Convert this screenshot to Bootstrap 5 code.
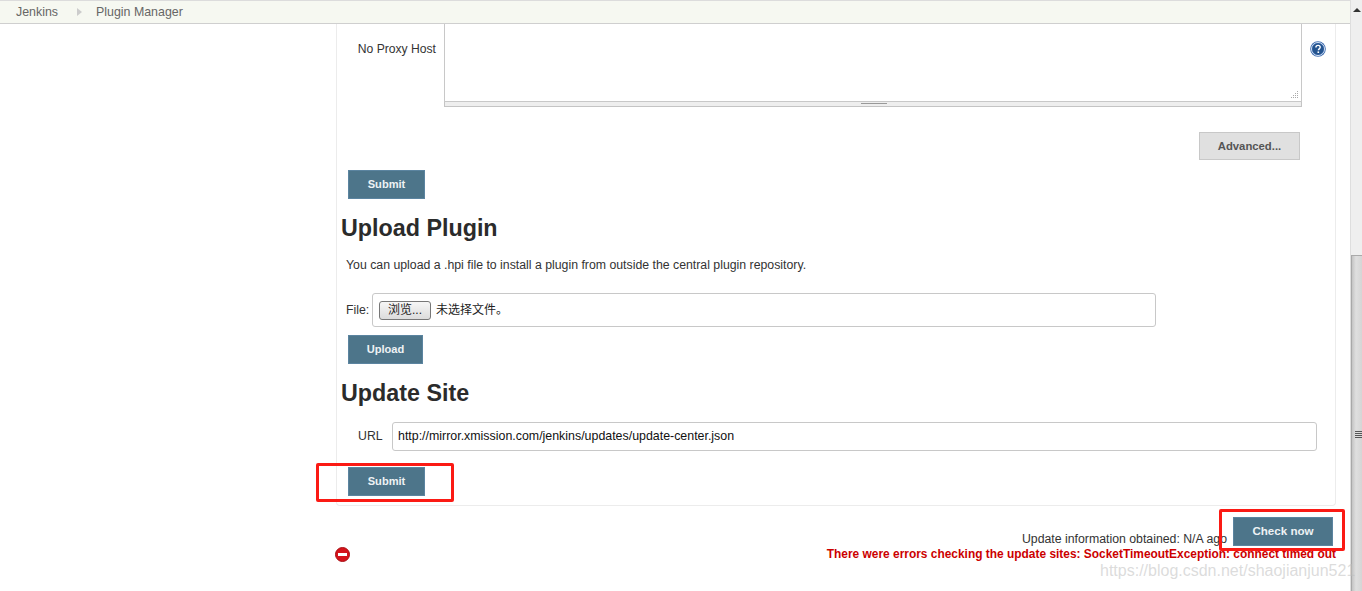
<!DOCTYPE html>
<html lang="en">
<head>
<meta charset="utf-8">
<title>Plugin Manager</title>
<link href="https://cdn.jsdelivr.net/npm/bootstrap@5.3.0/dist/css/bootstrap.min.css" rel="stylesheet">
<style>
html,body{height:591px;overflow:hidden}
body{font-family:"Liberation Sans",Arial,sans-serif;font-size:12.3px;color:#333;background:#fff;position:relative}
.page-col{width:1350px;height:591px}
.crumb-bar{height:24px;background:#f6f8f1;border-top:1px solid #dcdcdc;border-bottom:1px solid #cfcfcf;padding-left:16px;color:#666;font-size:12.4px;line-height:23px}
.crumb-arrow{width:0;height:0;border-left:5px solid #ccc;border-top:4px solid transparent;border-bottom:4px solid transparent;margin:0 14px 0 19px}
.panel-wrap{margin-left:336px;width:1000px;height:482px;border:1px solid #ececec;border-top:0;border-bottom-right-radius:4px;border-bottom-left-radius:4px;padding-left:4px}
.proxy-label{width:95px;text-align:right;padding-top:16px;margin-right:8px;font-size:12.15px}
.fake-area{width:858px;height:78px;border:1px solid #c8c8c8;border-top:0;position:relative}
.area-grip{position:absolute;right:2px;bottom:2px}
.area-bar{width:858px;height:5px;margin-left:103px;background:#eee;border:1px solid #c4c4c4;border-top:0;position:relative}
.area-bar::after{content:"";position:absolute;left:416px;top:1px;width:26px;height:1px;background:#999}
.help-dot{margin:17px 0 0 8px}
.jbtn{display:block;height:29px;background:#4d758a;border:1px solid #5b84a0;border-radius:0;color:#eef2f4;font-weight:700;font-size:11.1px;line-height:27px;padding:0;text-align:center}
.jbtn:hover{background:#4d758a;color:#eef2f4;border-color:#5b84a0}
.jbtn-77{width:77px;margin-left:7px}
.jbtn-75{width:75px;margin-left:7px}
.adv-btn{width:101px;height:28px;background:#e0e0e0;border:1px solid #c8c8c8;border-radius:0;color:#555;font-weight:700;font-size:11.3px;line-height:26px;padding:0;margin:25px 0 0 858px;display:block}
.jhead{font-size:23.3px;font-weight:700;color:#2b2b2b;line-height:28px;margin:0}
.intro{margin:0;padding-left:5px;line-height:14px;color:#333}
.file-label{padding-left:5px;width:31px;white-space:nowrap}
.file-box{width:784px;height:34px;border:1px solid #c8c8c8;border-radius:3px;padding-left:6px;font-size:12px;color:#222;font-family:"Liberation Sans","Noto Sans CJK SC",sans-serif}
.fake-browse{width:52px;height:19px;line-height:17px;text-align:center;background:linear-gradient(#f6f6f6,#dcdcdc);border:1px solid #777;border-radius:3px;margin-right:5px;color:#222}
.url-label{padding-left:17px;width:51px;font-size:12.3px}
.url-input{width:925px;height:29px;border:1px solid #c8c8c8;border-radius:3px;padding:0 5px;font-size:12.4px;font-family:"Liberation Sans",sans-serif;color:#111;line-height:27px}
.foot-row{height:86px;width:1000px;margin-left:336px;position:relative}
.info-line{height:29px;margin-top:11px}
.info-text{line-height:16px;padding-top:14px;margin-right:6px;color:#333}
.check-btn{width:100px;margin-right:3px;font-size:11.6px;line-height:25px}
.err-line{height:16px;line-height:14px}
.err-text{color:#c00;font-weight:700;font-size:11.93px}
.stop-mark{margin-left:-1px}
.scroll-col{width:12px;height:591px;background:#efefef;border-left:1px solid #dedede}
.scroll-arrow{width:0;height:0;border-left:4px solid transparent;border-right:4px solid transparent;border-bottom:4px solid #333;margin:8px auto 0}
.scroll-thumb{margin-top:243px;height:336px;background:linear-gradient(90deg,#c4c4c4,#dfdfdf 40%,#d5d5d5);border-top:1px solid #aaa;border-left:1px solid #a8a8a8;position:relative}
.scroll-lines{position:absolute;top:175px;left:3px;width:7px;height:8px;background:repeating-linear-gradient(#555 0 1px,transparent 1px 2px)}
.note-box{position:absolute;border:3px solid #fb1a14;border-radius:2px;pointer-events:none}
.note-a{left:316px;top:463px;width:138px;height:39px}
.note-b{left:1219px;top:509px;width:126px;height:42px}
.wm{position:absolute;left:1100px;top:561px;font-size:16px;color:rgba(190,190,190,.55);line-height:20px;white-space:nowrap}
</style>
</head>
<body>
<div class="d-flex">
  <div class="page-col">
    <div class="crumb-bar d-flex align-items-center">
      <span>Jenkins</span><span class="crumb-arrow"></span><span>Plugin Manager</span>
    </div>
    <div class="panel-wrap">
      <div class="d-flex">
        <div class="proxy-label">No Proxy Host</div>
        <div class="fake-area">
          <svg class="area-grip" width="9" height="9" viewBox="0 0 9 9"><g fill="#aaa"><rect x="7" y="1" width="1" height="1"/><rect x="5" y="3" width="1" height="1"/><rect x="7" y="3" width="1" height="1"/><rect x="3" y="5" width="1" height="1"/><rect x="5" y="5" width="1" height="1"/><rect x="7" y="5" width="1" height="1"/><rect x="1" y="7" width="1" height="1"/><rect x="3" y="7" width="1" height="1"/><rect x="5" y="7" width="1" height="1"/><rect x="7" y="7" width="1" height="1"/></g></svg>
        </div>
        <svg class="help-dot" width="16" height="16" viewBox="0 0 16 16"><circle cx="8" cy="8" r="7.8" fill="#3f6db0"/><circle cx="8" cy="8" r="6.5" fill="none" stroke="#d8e4f4" stroke-width="1"/><circle cx="8" cy="8" r="5.7" fill="#24548f"/><path d="M5.9 6.4c0-1.3 1-2 2.2-2s2.1.7 2.1 1.9c0 1.6-1.8 1.6-1.8 3" fill="none" stroke="#fff" stroke-width="1.4"/><rect x="7.5" y="10.4" width="1.6" height="1.6" fill="#fff"/></svg>
      </div>
      <div class="area-bar"></div>
      <button type="button" class="btn adv-btn">Advanced...</button>
      <a class="btn jbtn jbtn-77" style="margin-top:10px">Submit</a>
      <h2 class="jhead" style="margin-top:15px">Upload Plugin</h2>
      <p class="intro" style="margin-top:16px">You can upload a .hpi file to install a plugin from outside the central plugin repository.</p>
      <div class="d-flex align-items-center" style="margin-top:21px">
        <span class="file-label">File:</span>
        <div class="file-box d-flex align-items-center"><span class="fake-browse">浏览...</span><span>未选择文件。</span></div>
      </div>
      <a class="btn jbtn jbtn-75" style="margin-top:8px">Upload</a>
      <h2 class="jhead" style="margin-top:15px">Update Site</h2>
      <div class="d-flex align-items-center" style="margin-top:15px">
        <span class="url-label">URL</span>
        <div class="url-input">http://mirror.xmission.com/jenkins/updates/update-center.json</div>
      </div>
      <a class="btn jbtn jbtn-77" style="margin-top:16px">Submit</a>
    </div>
    <div class="foot-row">
      <div class="info-line d-flex justify-content-end">
        <span class="info-text">Update information obtained: N/A ago</span>
        <a class="btn jbtn check-btn">Check now</a>
      </div>
      <div class="err-line d-flex justify-content-between align-items-center">
        <svg class="stop-mark" width="15" height="15" viewBox="0 0 15 15"><circle cx="7.5" cy="7.5" r="7" fill="#d5121a"/><circle cx="7.5" cy="7.5" r="7" fill="none" stroke="#a80f14" stroke-width="1"/><rect x="3" y="6" width="9" height="3" fill="#fff"/></svg>
        <span class="err-text">There were errors checking the update sites: SocketTimeoutException: connect timed out</span>
      </div>
    </div>
  </div>
  <div class="scroll-col">
    <div class="scroll-arrow"></div>
    <div class="scroll-thumb"><div class="scroll-lines"></div></div>
  </div>
</div>
<div class="note-box note-a"></div>
<div class="note-box note-b"></div>
<div class="wm">https://blog.csdn.net/shaojianjun521</div>
<script src="https://cdn.jsdelivr.net/npm/bootstrap@5.3.0/dist/js/bootstrap.bundle.min.js"></script>
</body>
</html>
